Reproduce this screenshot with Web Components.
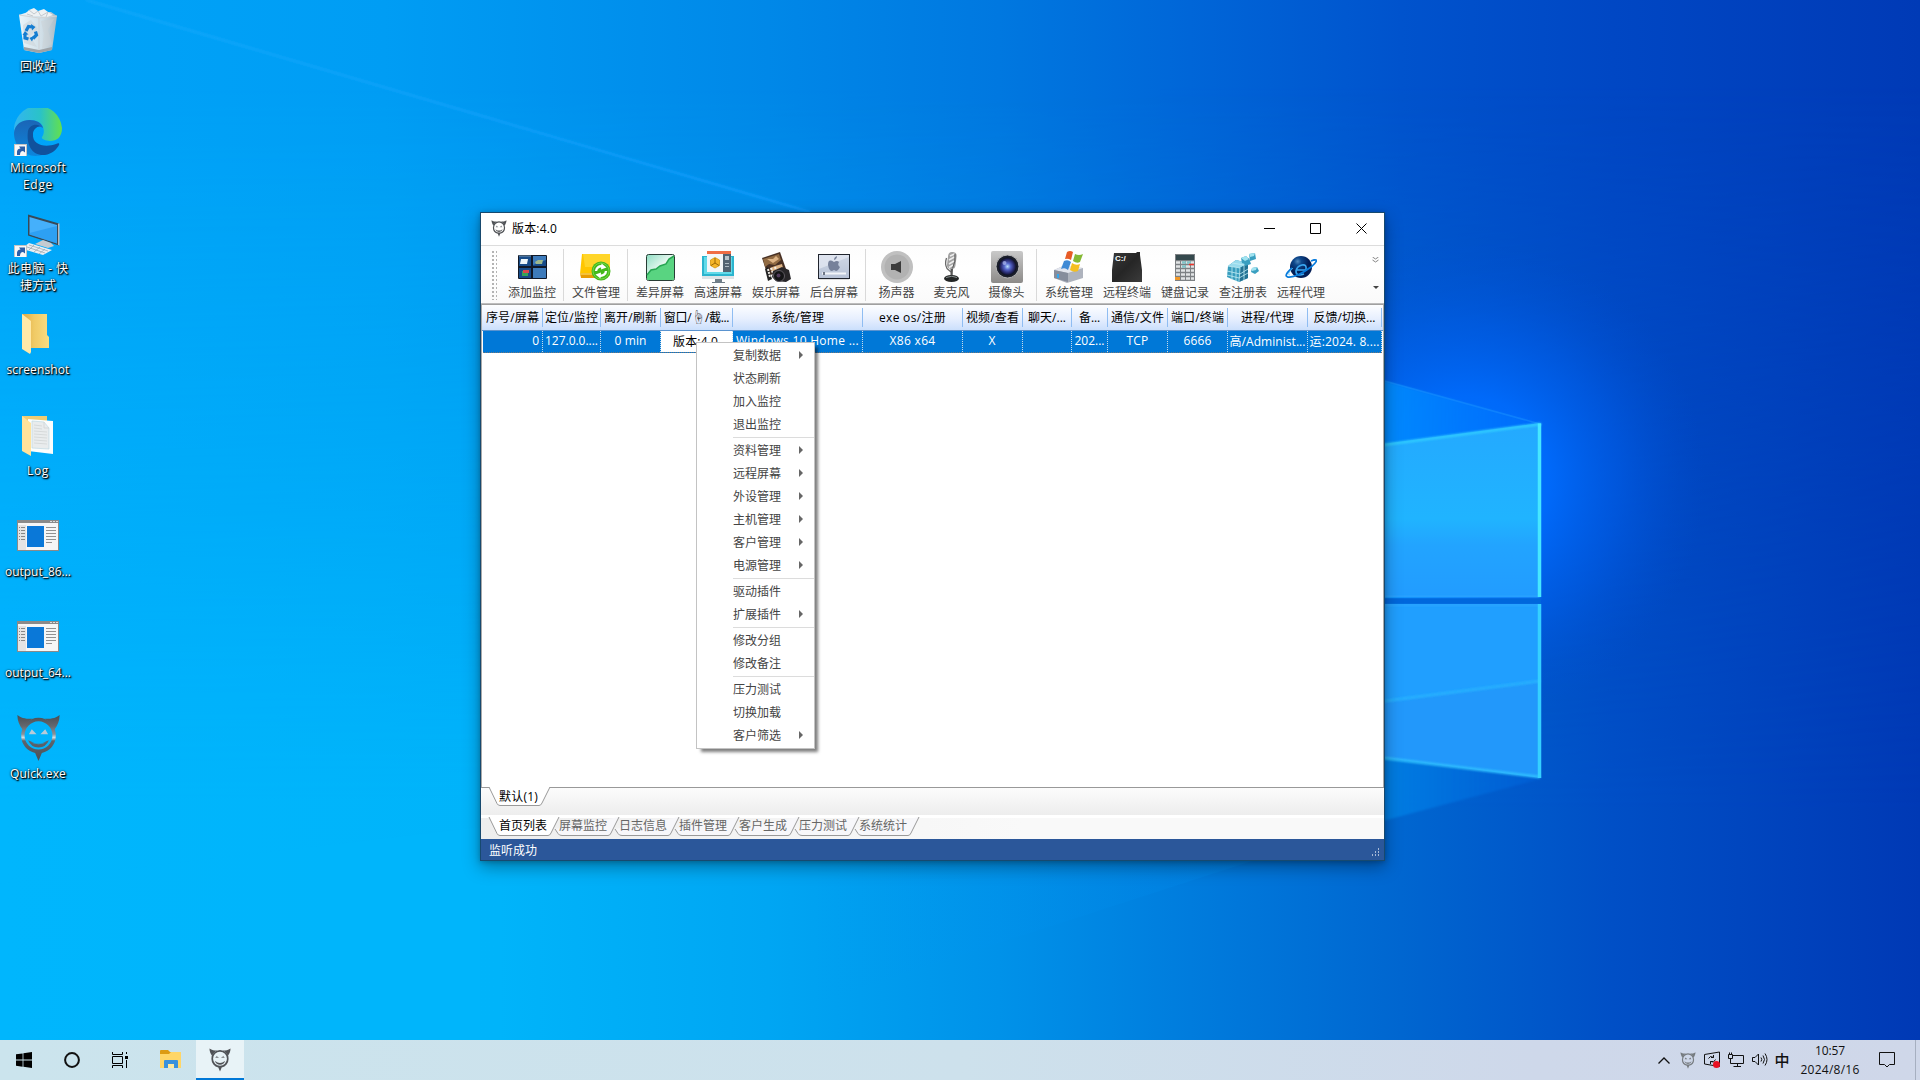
<!DOCTYPE html>
<html lang="zh-CN">
<head>
<meta charset="utf-8">
<title>Desktop</title>
<style>
html,body{margin:0;width:1920px;height:1080px;overflow:hidden;font-family:"Open Sans","Noto Sans CJK SC",sans-serif;font-size:12px;}
</style>
</head>
<body>
<desktop-screen></desktop-screen>
<script>
const DEVIL = c => `<g fill="${c}"><path d="M1 1 C6 5 11 5 17 5 C12 8 8 11 7 17 C3 12 1 7 1 1Z M45 1 C40 5 35 5 29 5 C34 8 38 11 39 17 C43 12 45 7 45 1Z"/><path fill-rule="evenodd" d="M23 4 A18 18 0 0 1 41 23 A18 18 0 0 1 26.500 40.500 L23 49 L19.500 40.500 A18 18 0 0 1 5 23 A18 18 0 0 1 23 4Z M23 7.500 A15 15 0 0 0 8.500 22.500 A14.500 14.500 0 0 0 37.500 22.500 A15 15 0 0 0 23 7.500Z"/><path d="M12 27 Q23 34 34 27 Q31 34.500 23 35 Q15 34.500 12 27Z M15 29.500 Q23 33.500 31 29.500 Q23 32 15 29.500Z"/></g>`;
const EYES = c => `<path d="M16 16 L21 21 H13Z M30 16 L25 21 H33Z" fill="${c}"/>`;
const SHORTCUT = `<rect x="0.500" y="36.500" width="12" height="12" fill="#f8f8f8" stroke="#c4c4c4"/><path d="M3 47V43.500Q3.500 40.500 6.500 40.500L5 38.500H11V44.500L9 43Q6 43 6 47Z" fill="#2d5fa8"/>`;
const APPWIN = `<rect x="3" y="8" width="42" height="31" fill="#8a8a8a"/><rect x="4" y="11" width="40" height="27" fill="#f6f6f6"/><rect x="4" y="13" width="8" height="25" fill="#e4e4e4"/><path d="M36 9.500h2m1 0h2m1 0h2" stroke="#ddd"/><rect x="13" y="14" width="17" height="21" fill="#0a78d8"/><path d="M32 15.500h10m-10 3h10m-10 3h10m-10 3h10m-10 3h10m-10 3h6" stroke="#929292"/><path d="M5 15.500h1m1 0h4m-6 3h1m1 0h4m-6 3h1m1 0h4m-6 3h1m1 0h4m-6 3h1m1 0h4" stroke="#888"/>`;
const ICONS = {
 devil:[46,50,DEVIL('url(#dv)')+EYES('#b9cbd8')+`<defs><linearGradient id="dv" gradientUnits="userSpaceOnUse" x1="0" y1="0" x2="0" y2="50"><stop stop-color="#454b52"/><stop offset=".25" stop-color="#64676d"/><stop offset=".42" stop-color="#8b9299"/><stop offset=".49" stop-color="#d0dce3"/><stop offset=".56" stop-color="#5f646b"/><stop offset="1" stop-color="#4a4e54"/></linearGradient></defs>`],
 devilS:[46,50,DEVIL('#505357')+EYES('#8f9498')],
 devilG:[46,50,DEVIL('#777c80')+EYES('#777c80')],
 bin:[48,48,`<defs><linearGradient id="b1"><stop stop-color="#fbfbfb"/><stop offset=".6" stop-color="#e0e3e6"/><stop offset="1" stop-color="#b7bdc2"/></linearGradient></defs><path d="M5 8 L14 5 37 5 43 9 38 43 25 46 10 43Z" fill="url(#b1)" opacity=".93"/><path d="M5 8 25 11 43 9" stroke="#d1d4d6" fill="none"/><path d="M10 40 25 43 38 40 38 43 25 46 10 43Z" fill="#9ea3a7"/><path d="M25 11V43" stroke="#cdd1d5"/><path d="M9 18 17 13 24 22 16 29 23 40 10 36Z M27 14 40 12 34 23 38 37 28 42 30 27Z" fill="#ccd1d5" opacity=".5"/><path d="M11 7 15 3 20 1 24 4 30 2 34 5 39 8 33 10 24 9 17 9Z" fill="#eef1f3"/><path d="M15 3 20 7 24 4 27 9 34 5 32 10M13 7 19 9" stroke="#c3c9ce" fill="none"/><g fill="none" stroke="#147dd1" stroke-width="3.200"><path d="M12 24 14.500 19.500 18 20M21.500 24.500 22.500 28 19 31.500M14.500 32 11 31 11 27"/></g><path d="M17 17 21.500 20 18 23.500Z M20.500 28.500 18 34.500 15.500 31Z M8.500 28 11 24 14.500 27.500Z" fill="#147dd1"/>`],
 edge:[48,48,`<defs><linearGradient id="e1"><stop stop-color="#32b5f1"/><stop offset=".55" stop-color="#2ac3c7"/><stop offset="1" stop-color="#64e04c"/></linearGradient><linearGradient id="e2" x2="0" y2="1"><stop stop-color="#1b65b6"/><stop offset="1" stop-color="#0c86dc"/></linearGradient></defs><path d="M0 24 A24 24 0 0 1 48 20 C48 29 43 33 36 33 C31 33 27 31 28 29 C32 23 30 12 16 12 C8 12 2 17 0 24Z" fill="url(#e1)"/><path d="M0 25 C1 8 27 9 29 20 C24 17 18 20 18 27 C18 36 24 43 31 46 C14 53 0 40 0 25Z" fill="url(#e2)"/><path d="M14 23 C12 37 18 48 31 47 C38 46 43 41 45 37 C46 35 44 35 42 36 C31 40 18 37 19 26 C19 22 22 19 26 18 C21 15 15 18 14 23Z" fill="#10529d"/>${SHORTCUT}`],
 pc:[48,48,`<path d="M14 5.500 L45 14.500 V36.500 L14 26.500Z" fill="#384957"/><path d="M15.500 8 43 16 V34.500 L15.500 25.500Z" fill="#45b0fb"/><path d="M15.500 24 43 17 V34.500 L15.500 25.500Z" fill="#168fec" opacity=".5"/><path d="M44 14.500 45.500 14.500 V36.500 L44 36Z" fill="#b5bac0"/><path d="M29 31 37 34 40 37 34 39 21 35Z" fill="#c5cbd0"/><path d="M11 37 L15 34 38 41 29 46 12 41Z" fill="#e9eef2"/><path d="M15 36 34 42M13 38 31 44M20 36 15 41M26 38 20 43M31 40 25 45" stroke="#97a2ab" stroke-width=".7"/>${SHORTCUT}`],
 folder:[48,48,`<defs><linearGradient id="f1"><stop stop-color="#dda844"/><stop offset=".45" stop-color="#f0ca65"/><stop offset="1" stop-color="#f8dc82"/></linearGradient></defs><path d="M8 4H33V25L35 27V38H8Z" fill="url(#f1)"/><path d="M8 4 17 11V42L16 44 8 39Z" fill="#ffe9a8"/>`],
 folderDoc:[48,48,`<path d="M8 5H33V40H8Z" fill="#efcc73"/><path d="M14 8 39 10 V43 L14 40Z" fill="#fbfdfd"/><path d="M18 10 30 11 35 17V38L18 37Z" fill="#e9eced" stroke="#bed8e2" stroke-width=".7"/><path d="M30 11V17H35M20 14 28 15M20 17 28 18M20 20 33 21M20 23 33 24M20 26 33 27M20 29 33 30M20 32 33 33" stroke="#d0d4d4" fill="none" stroke-width=".8"/><path d="M8 5 17 12V45L8 40Z" fill="#ffe29b"/>`],
 appwin:[48,48,APPWIN],
 monitors:[32,32,`<rect x="2" y="4" width="29" height="24" rx="1" fill="#101827"/><path d="M3 5H15V15H3ZM17 5H30V15H17ZM3 17H15V27H3ZM17 17H30V27H17Z" fill="#174b88"/><path d="M17 17H30V27H17ZM17 5H30V9L17 14Z" fill="#3d7bbb"/><path d="M5 8H12L11 13H4Z" fill="#edf6fa"/><path d="M19 11 22 9H27L26 13H20Z" fill="#9fb98d"/><path d="M6 20H12V25H6Z" fill="#36a457"/><path d="M7 19H13V22H7Z" fill="#d9484d"/><path d="M3 5H15" stroke="#7796b1"/>`],
 files:[32,32,`<path d="M2 3H30V24L26 27H2L0 23Z" fill="#ffc600"/><path d="M3 3H30V16H5Z" fill="#ffd529"/><path d="M0 22H29L27 27H1Z" fill="#e89c05"/><path d="M0 23H26" stroke="#ffe879"/><circle cx="21" cy="20" r="9.500" fill="#45b91b"/><circle cx="21" cy="20" r="8" fill="none" stroke="#71d646"/><path d="M16 20A5 5 0 0 1 22.500 15.500M26 20A5 5 0 0 1 19.500 24.500" fill="none" stroke="#fff" stroke-width="2.400"/><path d="M21.500 12.500 26.500 16.500 21 18.500Z M20.500 27.500 15.500 23.500 21 21.500Z" fill="#fff"/>`],
 chart:[32,32,`<defs><linearGradient id="c1" x2="1" y2="1"><stop stop-color="#8edec3"/><stop offset=".5" stop-color="#e9f8f1"/><stop offset="1" stop-color="#b9eacb"/></linearGradient></defs><rect x="2.500" y="3.500" width="28" height="26" rx="2" fill="url(#c1)" stroke="#283d35"/><path d="M3 24 7 19 12 18 16 15 22 13 25 8 30 5V28Q30 29 29 29H4Q3 29 3 28Z" fill="#59d481"/><path d="M3 24 7 19 12 18 16 15 22 13 25 8 30 5" fill="none" stroke="#27a552" stroke-width="1.500"/>`],
 fast:[32,32,`<rect x="0" y="5" width="32" height="23" fill="#2bb4ce"/><rect x="2" y="6" width="28" height="17" fill="#62dae9"/><rect x="5" y="1" width="24" height="20" fill="#f3f6f8"/><path d="M5 0H29V3H5Z" fill="#f06d44"/><path d="M21 3H29V21H21Z" fill="#526371"/><rect x="23" y="5" width="4" height="4" fill="#b9c3ca"/><path d="M23 12.500h4m-4 3h4" stroke="#adbac2"/><path d="M13 6.500 17.500 9V14.500L13 17 8.500 14.500V9Z" fill="#f5b62a" stroke="#d6960d" stroke-width=".8"/><path d="M13 7V12L9 14.500M13 12 17 14.500" fill="none" stroke="#9c6903"/><path d="M0 25H32V28H0Z" fill="#dde4e7"/><path d="M13 28H20V31H13ZM10 31H23V32H10Z" fill="#6f7d88"/>`],
 fun:[32,32,`<path d="M2 7 20 1 26 18 8 25Z" fill="#473024"/><path d="M3 8 19 3 21 9 15 14 9 13 5 16Z" fill="#916b43"/><path d="M7 8 13 8 16 5 19 8 13 12Z M10 17 15 15 22 13 23 17 12 21Z" fill="#ddb486"/><path d="M5 18 8 16 12 28 8 30Z" fill="#222"/><path d="M8 18 10 26M11 17 14 25M15 16 17 22" stroke="#f1eee8" stroke-width="2" stroke-dasharray="2 1"/><path d="M13 20 22 16 29 19 31 28 26 31 16 30 12 26Z" fill="#282629"/><circle cx="19" cy="25" r="5.500" fill="#141416" stroke="#5d5960"/><circle cx="18.500" cy="24.500" r="2" fill="#513b5b"/>`],
 mac:[32,32,`<defs><linearGradient id="m1" x2="0" y2="1"><stop stop-color="#cfd7e5"/><stop offset="1" stop-color="#b7c2d6"/></linearGradient></defs><rect x=".5" y="3.500" width="31" height="24" fill="url(#m1)" stroke="#20242d"/><path d="M1 4H31V6L1 18Z" fill="#e6eaf3" opacity=".7"/><path d="M16 11Q10 7 10 14Q11 20 14 20L16 19 18 20Q20 20 22 16Q19 14 21 11Q19 9 16 11ZM16 9Q16 6 19 5Q19 8 16 9Z" fill="#76819a"/><path d="M4 22.500H28" stroke="#f2f4f8" stroke-width="2"/><path d="M6 21V24" stroke="#6d7585" stroke-width="2"/><path d="M1 28.500H31" stroke="#ddd"/>`],
 speaker:[32,32,`<circle cx="16" cy="16" r="16" fill="#c0c0c0"/><circle cx="16" cy="16" r="12.500" fill="#b2b2b2"/><path d="M10 13H14L20 10V22L14 19H10Z" fill="#3b3b3b"/>`],
 mic:[32,32,`<path d="M10.500 7Q8.500 13 11 17.500L15 21" fill="none" stroke="#6a6a6a" stroke-width="1.300"/><rect x="11.500" y="1" width="8.500" height="17" rx="4" fill="#a2a2a2" transform="rotate(7 16 10)"/><path d="M14 5 18.500 3M13 9 18.500 6M13 13 18 10M13 16.500 17 14" stroke="#ededed" stroke-width="1.500"/><path d="M19 3Q20 10 16.500 17.500" fill="none" stroke="#5a5a5a"/><path d="M14.500 18H17L16.500 27H14.500Z" fill="#565656"/><ellipse cx="15.500" cy="27.500" rx="7.500" ry="3.500" fill="#242626"/><path d="M10 26.500Q16 24 21 26.500" stroke="#8b9393" fill="none"/>`],
 cam:[32,32,`<defs><linearGradient id="k1" x2="0" y2="1"><stop stop-color="#c9c9c9"/><stop offset="1" stop-color="#8c8a88"/></linearGradient><radialGradient id="k2"><stop stop-color="#b8dfff"/><stop offset=".35" stop-color="#5668cb"/><stop offset=".7" stop-color="#2c2f76"/><stop offset="1" stop-color="#0b0e1d"/></radialGradient></defs><rect width="32" height="32" rx="2" fill="url(#k1)"/><circle cx="16.500" cy="15.500" r="11.500" fill="#1a1e2a" stroke="#b9b9b9"/><circle cx="16.500" cy="15.500" r="9" fill="url(#k2)"/><circle cx="13.500" cy="12" r="2" fill="#afbdf3" opacity=".7"/>`],
 sys:[32,32,`<path d="M1 19 10 15 30 17 30 27 14 32 1 27Z" fill="#aeb3bd"/><path d="M1 19 10 15 30 17 15 22Z" fill="#e2e5ed"/><path d="M1 19 15 22 15 31 1 27Z" fill="#868d9c"/><rect x="4" y="23" width="2" height="4" fill="#32a7ef"/><path d="M14 1Q17-1 20 1L18 9Q15 7 12 8Z" fill="#e75b26"/><path d="M22 3Q26 5 30 3L27 11Q24 13 20 10Z" fill="#84b934"/><path d="M11 10Q15 8 18 11L15 19Q12 16 8 18Z" fill="#3f8ad5"/><path d="M19 12Q23 15 27 13L25 20Q21 22 17 19Z" fill="#f4bf21"/>`],
 term:[32,32,`<defs><linearGradient id="t1" x2="1" y2="1"><stop stop-color="#393939"/><stop offset=".5" stop-color="#262626"/><stop offset="1" stop-color="#3b3b3b"/></linearGradient></defs><path d="M3 2H25L26 1H29V4L31 19V31H1V19Z" fill="url(#t1)"/><text x="4" y="10" font-family="Liberation Sans" font-size="8" font-weight="bold" fill="#fff">C:/</text>`],
 calc:[32,32,`<rect x="6" y="3" width="20" height="27" fill="#7d8184"/><rect x="7" y="4" width="18" height="5" fill="#35494d"/><path d="M7 11.500h18m-18 4h18m-18 4h18m-18 4h18m-18 4h18" stroke="#e1e4e5" stroke-width="2.500" stroke-dasharray="4 1"/><path d="M13 11.500h4m1 0h4m-9 4h4" stroke="#83c4c7" stroke-width="2.500"/><path d="M20 13.500H25" stroke="#ee342b" stroke-width="1.500"/><path d="M6 27.500H11" stroke="#ef982a" stroke-width="3"/>`],
 reg:[32,32,`<path d="M1 15 9 9 21 12 21 27 12 31 0 26Z" fill="#389dbe"/><path d="M1 15 9 9 21 12 13 17Z" fill="#99dbed"/><path d="M13 17 21 12V27L12 31Z" fill="#237293"/><path d="M1 15 13 17 12 31M5 12 17 14M0 20 13 23 21 18M0 24 12 27 21 22M5 16V29M9 17V30M17 14V29" stroke="#c1edf5" fill="none" stroke-width=".8"/><path d="M14 7 19 5 22 8 21 14 15 12ZM22 3 28 2 29 8 23 10ZM25 17 30 16 32 20 28 23 24 21ZM16 9 22 7 24 13 18 15Z" fill="#3a9fc0"/><path d="M14 7 19 5 22 8 18 10ZM22 3 28 2 27 5 23 6ZM25 17 30 16 29 19 25 20Z" fill="#a0e3f0"/>`],
 proxy:[32,32,`<defs><radialGradient id="p1" cx=".35" cy=".25"><stop stop-color="#5188bb"/><stop offset=".35" stop-color="#0d478b"/><stop offset="1" stop-color="#021d55"/></radialGradient></defs><circle cx="16" cy="16" r="11" fill="url(#p1)"/><path d="M12 19H21Q22 13 17 14Q12 15 11 20Q11 26 19 23" stroke="#3ba7f0" fill="none" stroke-width="1.700"/><path d="M7 17Q-2 25 3 26Q11 27 26 16Q35 8 29 9L26 10" fill="none" stroke="#087bdc" stroke-width="1.800"/><path d="M8 17Q1 24 5 24" fill="none" stroke="#63c9f9" stroke-width=".7"/>`],
 start:[16,16,`<path d="M0 2.300 6.600 1.400V7.600H0ZM7.400 1.300 16 0V7.600H7.400ZM0 8.400H6.600V14.700L0 13.800ZM7.400 8.400H16V16L7.400 14.800Z" fill="#000"/>`],
 cortana:[16,16,`<circle cx="8" cy="8" r="6.900" fill="none" stroke="#111" stroke-width="2"/>`],
 tasks:[16,16,`<path d="M.5 0V2.500H10.500V0M.5 16V13.500H10.500V16M.5 4.500H10.500V11.500H.5ZM14.500 0V2M14.500 8V16" fill="none" stroke="#000"/><rect x="13" y="4" width="3" height="3"/>`],
 explorer:[22,20,`<path d="M0 1Q0 0 1 0H8L10 2H20Q21 2 21 3V6H0Z" fill="#dc9b13"/><path d="M0 4H9L11 2H21V18H0Z" fill="#ffd667"/><path d="M4 18V11Q4 10 5 10H17Q18 10 18 11V18H14V14H8V18Z" fill="#3a91dc"/><path d="M8 14H14V18H8Z" fill="#ffe89e"/>`],
 up:[12,7,`<path d="M.5 6.500 6 1 11.500 6.500" fill="none" stroke="#111" stroke-width="1.300"/>`],
 sync:[18,18,`<path d="M.5 3.500 15.500 1V15.500L.5 13Z" fill="none" stroke="#111"/><path d="M4.500 7.500Q6 4 9.500 6.500V4M11.500 8.500Q10 12.500 6.500 10.500V13M9.500 6.500H7M6.500 10.500H9" fill="none" stroke="#111"/><circle cx="12.500" cy="13.500" r="3.500" fill="#e81123"/>`],
 net:[17,16,`<path d="M5 3.500H15.500V11.500H2.500V6M9.500 12V14.500M5.500 14.500H13M.5 2.500H4.500V6.500H.5Z M1.500 0.500V2.500M3.500 .5V2.500" fill="none" stroke="#111"/>`],
 vol:[16,16,`<path d="M.5 5.500H3L6.500 2V13L3 9.500H.5Z M9 5.500Q10.500 7.500 9 9.500M11 3.500Q14 7.500 11 11.500M13 1.500Q17 7.500 13 13.500" fill="none" stroke="#111"/>`],
 note:[16,16,`<path d="M.5 .5H15.500V12.500H10.500L8 15 5.500 12.500H.5Z" fill="none" stroke="#111"/>`],
};
const define=(name,html,setup)=>customElements.define(name,class extends HTMLElement{
  connectedCallback(){
    if(this.shadowRoot)return;
    const t=document.createElement('template');
    t.innerHTML=typeof html==='function'?html(this):html;
    this.attachShadow({mode:'open'}).append(t.content.cloneNode(true));
    if(setup)setup(this);
  }
});

define('svg-icon',e=>{const [w,h,s]=ICONS[e.getAttribute('name')];return `<style>:host{display:block;flex:none}svg{display:block}</style><svg width="${e.getAttribute('w')||w}" height="${e.getAttribute('h')||h}" viewBox="0 0 ${w} ${h}">${s}</svg>`;});

/* One line of text whose tracking is adjusted to a given advance width. */
define('fit-text',`<style>:host{display:inline-block;white-space:pre}span{display:inline-block}</style><span><slot></slot></span>`,e=>{
  const s=e.shadowRoot.querySelector('span'),w=+e.getAttribute('w');
  if(!w)return;
  const n=[...e.textContent].length,d=(w-s.getBoundingClientRect().width)/n;
  s.style.letterSpacing=d.toFixed(3)+'px';
});

define('wall-paper',`<style>:host{display:block;position:absolute;inset:0}svg{display:block}</style>
<svg width="1920" height="1080" viewBox="0 0 1920 1080">
<defs>
<linearGradient id="top"><stop stop-color="#00a4f9"/><stop offset=".2" stop-color="#009df4"/><stop offset=".4" stop-color="#0088e8"/><stop offset=".52" stop-color="#0078e0"/><stop offset=".62" stop-color="#0066d8"/><stop offset=".73" stop-color="#0053cd"/><stop offset=".84" stop-color="#0047c4"/><stop offset="1" stop-color="#003ab6"/></linearGradient>
<linearGradient id="bot"><stop stop-color="#00b6fd"/><stop offset=".26" stop-color="#00b4fa"/><stop offset=".4" stop-color="#00a6f3"/><stop offset=".52" stop-color="#0092e9"/><stop offset=".62" stop-color="#007cdd"/><stop offset=".73" stop-color="#0066d0"/><stop offset=".84" stop-color="#004fc6"/><stop offset="1" stop-color="#0039b5"/></linearGradient>
<linearGradient id="fade" x2="0" y2="1"><stop offset=".08" stop-color="#000"/><stop offset=".75" stop-color="#fff"/></linearGradient>
<mask id="fm"><rect width="1920" height="1080" fill="url(#fade)"/></mask>
<radialGradient id="glow" gradientUnits="userSpaceOnUse" cx="0" cy="0" r="1" gradientTransform="translate(1465 480) scale(240 240)"><stop stop-color="#0074ff"/><stop offset=".35" stop-color="#006cff" stop-opacity=".9"/><stop offset=".65" stop-color="#0060f0" stop-opacity=".5"/><stop offset="1" stop-color="#0050d4" stop-opacity="0"/></radialGradient>
<linearGradient id="bu" gradientUnits="userSpaceOnUse" x1="1385" y1="0" x2="1540" y2="0"><stop stop-color="#0090ff" stop-opacity=".85"/><stop offset="1" stop-color="#0070ff" stop-opacity=".4"/></linearGradient>
<linearGradient id="bd" gradientUnits="userSpaceOnUse" x1="1385" y1="0" x2="1540" y2="0"><stop stop-color="#0082e6" stop-opacity=".85"/><stop offset="1" stop-color="#0062dc" stop-opacity=".5"/></linearGradient>
<linearGradient id="beam"><stop offset=".3" stop-color="#0094f4" stop-opacity="0"/><stop offset="1" stop-color="#0094f4" stop-opacity=".4"/></linearGradient>
<linearGradient id="pane" x2="0" y2="1"><stop stop-color="#24a9ff"/><stop offset=".55" stop-color="#20b4ff"/><stop offset=".7" stop-color="#22a4ff"/><stop offset="1" stop-color="#229cff"/></linearGradient>
<linearGradient id="ray" gradientUnits="userSpaceOnUse" x1="86" y1="0" x2="810" y2="0"><stop stop-color="#28b0ff" stop-opacity=".35"/><stop offset="1" stop-color="#109cff" stop-opacity=".8"/></linearGradient>
<filter id="soft" x="-10%" y="-10%" width="120%" height="120%"><feGaussianBlur stdDeviation="1"/></filter>
</defs>
<rect width="1920" height="1080" fill="url(#top)"/>
<rect width="1920" height="1080" fill="url(#bot)" mask="url(#fm)"/>
<rect width="1920" height="1080" fill="url(#glow)"/>
<path d="M600 700H1300V846L1255 860 700 1040H600Z" fill="url(#beam)" opacity=".5"/>
<path d="M1300 358 1540 423V601H1300Z" fill="url(#bu)" filter="url(#soft)"/>
<path d="M1300 601H1540V779L1300 843Z" fill="url(#bd)" filter="url(#soft)"/>
<path d="M86 0 810 212" stroke="url(#ray)" stroke-width="2.500" filter="url(#soft)"/>
<path d="M1370 377 1540 424" stroke="#229aff" stroke-width="1.500" opacity=".4"/>
<path d="M0 884 480 827V1040H0Z" fill="#00b8ff" opacity=".2"/>
<path d="M1300 455 1541 423V597H1300Z" fill="url(#pane)"/>
<path d="M1300 604H1541V778L1300 747Z" fill="#2298fb"/>
<path d="M1300 712 1541 680V604H1300Z" fill="#209fff"/>
<g fill="none" filter="url(#soft)"><path d="M1300 456 1541 424" stroke="#30ceff" stroke-width="2.500"/><path d="M1300 712 1540 681" stroke="#28b4ff" stroke-width="2.500"/><path d="M1300 748 1540 777" stroke="#31c3ff" stroke-width="2.500"/><path d="M1300 597H1540M1300 605H1540" stroke="#2da9ff" stroke-width="1.500"/></g>
<path d="M1539.500 423.500V597" stroke="#46e7ff" stroke-width="3.500"/><path d="M1539.500 604V778" stroke="#35d0ff" stroke-width="3.500"/>
<path d="M1300 601H1541" stroke="#0067dc" stroke-width="5.500"/>
</svg>`);

define('desk-item',e=>`<style>
:host{display:flex;flex-direction:column;align-items:center;width:76px;height:101px;box-sizing:border-box;padding-top:5px;color:#fff;line-height:17px;text-shadow:1px 1px 2px #000,0 0 2px rgba(0,0,0,.8),1px 1px 1px rgba(0,0,0,.9)}
svg-icon{margin-bottom:3px}.devil{margin:0 0 3px}</style>
<svg-icon name="${e.getAttribute('icon')}" ${e.getAttribute('icon')==='devil'?'class="devil" w="45" h="48"':'w="48" h="48"'}></svg-icon><slot></slot>`);

define('tool-button',e=>`<style>
:host{display:flex;flex-direction:column;align-items:center;width:${e.getAttribute('w')||58}px;color:#444;line-height:16px;flex:none}svg-icon{margin-bottom:2px}</style>
<svg-icon name="${e.getAttribute('icon')}"></svg-icon><slot></slot>`);
define('tool-sep',`<style>:host{display:block;flex:none;width:1px;height:52px;background:#d9d9d9;margin:-2px 3px 0 2px}</style>`);

define('tool-bar',`<style>
:host{display:flex;height:58px;box-sizing:border-box;border-bottom:1px solid #bcbcbc;background:linear-gradient(#fdfdfd,#fff 40%,#fafafa);padding:5px 0 0 9px;align-items:flex-start}
.grip{width:6px;height:50px;margin:-1px 6px 0 1px;flex:none;background:radial-gradient(circle,#999 .6px,transparent 1px) 0 0/4px 4px}
.more{margin-left:auto;width:13px;padding-right:2px;display:flex;flex-direction:column;align-items:center;gap:23px;padding-top:6px}</style>
<div class="grip"></div>
<tool-button icon="monitors">添加监控</tool-button><tool-sep></tool-sep>
<tool-button icon="files">文件管理</tool-button><tool-sep></tool-sep>
<tool-button icon="chart">差异屏幕</tool-button><tool-button icon="fast">高速屏幕</tool-button><tool-button icon="fun">娱乐屏幕</tool-button><tool-button icon="mac">后台屏幕</tool-button><tool-sep></tool-sep>
<tool-button w="55" icon="speaker">扬声器</tool-button><tool-button w="55" icon="mic">麦克风</tool-button><tool-button w="55" icon="cam">摄像头</tool-button><tool-sep></tool-sep>
<tool-button icon="sys">系统管理</tool-button><tool-button icon="term">远程终端</tool-button><tool-button icon="calc">键盘记录</tool-button><tool-button icon="reg">查注册表</tool-button><tool-button icon="proxy">远程代理</tool-button>
<div class="more"><svg width="7" height="6"><path d="M.5 0 3.500 2 6.500 0M.5 3 3.500 5 6.500 3" stroke="#888" fill="none"/></svg><svg width="6" height="4"><path d="M0 0H6L3 3Z" fill="#444"/></svg></div>`);

const COLS=[[60,'序号/屏幕',53,'0',0],[58,'定位/监控',53,'127.0.0....',53],[60,'离开/刷新',53,'0 min',32],[72,'窗口/<span class="hand">☝\uFE0E</span>/截...',65,'版本:4.0',45],[130,'系统/管理',53,'Windows 10 Home ...',123],[100,'exe os/注册',67,'X86 x64',46],[60,'视频/查看',53,'X',8],[49,'聊天/...',38,'',0],[36,'备...',21,'202...',30],[60,'通信/文件',53,'TCP',22],[60,'端口/终端',53,'6666',28],[80,'进程/代理',53,'高/Administ...',76],[74,'反馈/切换...',62,'运:2024. 8....',70]];
define('host-grid',`<style>
:host{display:flex;flex-direction:column;height:483px;background:#fff;border-left:1px solid #aaa;border-top:1px solid #a0a0a0;border-right:1px solid #aaa;box-sizing:border-box}
.row{display:flex}.cell{box-sizing:border-box;display:flex;align-items:center;justify-content:center;white-space:nowrap;flex:none}
.head{height:26px;box-sizing:border-box;padding-left:1px;background:linear-gradient(#fdfeff,#e7effe 55%,#cbdffc);border-bottom:1px solid #5a93cf;color:#000}
.head .cell{height:19px;margin-top:3px;border-right:1px solid #8fbdf2;padding-bottom:1px}
.head fit-text{line-height:17px;height:17px}.hand{font-size:14px;line-height:10px;color:#444}
.data{margin-left:1px;height:22px;width:899px;background:#0078d7;color:#fff;border-bottom:1px dotted #777;box-sizing:border-box}
.data .cell{border-right:1px dotted #c7dbe9;height:21px;padding-bottom:2px}.data .cell:first-child{justify-content:flex-end;padding-right:3px}.data .cell:nth-child(4){background:#fff;color:#000;padding-right:2px}</style>
<div class="row head">${COLS.map(c=>`<div class="cell" style="width:${c[0]}px"><fit-text w="${c[2]}">${c[1]}</fit-text></div>`).join('')}</div>
<div class="row data">${COLS.map(c=>`<div class="cell" style="width:${c[0]}px">${c[3]?`<fit-text w="${c[4]}">${c[3]}</fit-text>`:''}</div>`).join('')}</div>`);

define('sheet-tab',e=>{const w=+e.getAttribute('w'),on=e.hasAttribute('on'),first=e.hasAttribute('first');return `<style>
:host{display:grid;width:${w}px;height:19px;flex:none;margin-right:-8px;color:${on?'#000':'#666'}}svg,div{grid-area:1/1}svg{display:block;overflow:visible}div{padding-left:${first?10:8}px;line-height:var(--tab-line,17px);height:19px;white-space:nowrap}</style>
<svg width="${w}" height="19"><path d="${first?'M0 0 L8 16.500':'M4 12 L7 16.500'} Q${first?9:8} 18.500 11 18.500 H${w-11} Q${w-9} 18.500 ${w-8} 16 L${w} 0" fill="${on?'#fff':'#f7f7fa'}" stroke="#999"/></svg><div><slot></slot></div>`;});

define('menu-item',e=>`<style>:host{display:flex;align-items:center;justify-content:space-between;height:23px;box-sizing:border-box;padding:0 10px 1px 36px;color:#444}svg{display:block}</style><slot></slot>${e.hasAttribute('sub')?'<svg width="5" height="8"><path d="M0 0 4 4 0 8Z" fill="#666"/></svg>':''}`);
define('context-menu',`<style>
:host{display:block;position:absolute;left:696px;top:342px;width:119px;height:407px;box-sizing:border-box;border:1px solid #c3c3c3;padding-top:1px;background:#fff;box-shadow:4px 4px 3px -1px rgba(0,0,0,.5)}
hr{border:0;height:1px;background:#dcdcdc;margin:1px 0 1px 36px}</style>
${[['复制数据',1],['状态刷新'],['加入监控'],['退出监控'],0,['资料管理',1],['远程屏幕',1],['外设管理',1],['主机管理',1],['客户管理',1],['电源管理',1],0,['驱动插件'],['扩展插件',1],0,['修改分组'],['修改备注'],0,['压力测试'],['切换加载'],['客户筛选',1]].map(i=>i?`<menu-item ${i[1]?'sub':''}>${i[0]}</menu-item>`:'<hr>').join('')}`);

define('app-window',`<style>
:host{display:flex;flex-direction:column;position:absolute;left:480px;top:212px;width:905px;height:649px;box-sizing:border-box;border:1px solid #17496e;background:#fff;box-shadow:0 6px 16px rgba(0,0,0,.34),0 1px 5px rgba(0,0,0,.22)}
.title{height:32px;box-sizing:content-box;display:flex;align-items:center;padding:0 17px 0 10px;border-bottom:1px solid #dcdcdc;color:#000;flex:none}
.title svg-icon{margin-right:5px;margin-bottom:2px}.title fit-text{margin-bottom:2px}.ctl{margin-left:auto;display:flex;gap:35px;align-items:center;margin-bottom:1px}.ctl svg{display:block}
.groups{height:27px;border-top:1px solid #999;background:linear-gradient(#fcfcfc,#ededed);padding-left:8px;display:flex;flex:none;--tab-line:19px}
.groups sheet-tab{margin-top:-1px}
.pages{height:21px;margin-top:3px;background:#fafafa linear-gradient(90deg,#eee,#f9f9f9 60%);padding-left:8px;display:flex;flex:none;--tab-line:18px}
.pages sheet-tab{margin-top:-1px}
.status{flex:1;background:#2b579a;color:#fff;display:flex;align-items:center;justify-content:space-between;padding:0 3px 0 8px}
.status svg{align-self:flex-end;margin-bottom:3px}</style>
<div class="title"><svg-icon name="devilS" w="16" h="17"></svg-icon><fit-text w="45">版本:4.0</fit-text>
<div class="ctl"><svg width="11" height="11"><path d="M0 5.500H11" stroke="#000"/></svg><svg width="11" height="11"><path d="M.5 .5H10.500V10.500H.5Z" fill="none" stroke="#000"/></svg><svg width="11" height="11"><path d="M.5 .5 10.500 10.500M10.500 .5 .5 10.500" stroke="#000"/></svg></div></div>
<tool-bar></tool-bar><host-grid></host-grid>
<div class="groups"><sheet-tab w="61" on first><fit-text w="39">默认(1)</fit-text></sheet-tab></div>
<div class="pages"><sheet-tab w="70" on first>首页列表</sheet-tab>${['屏幕监控','日志信息','插件管理','客户生成','压力测试','系统统计'].map(t=>`<sheet-tab w="68">${t}</sheet-tab>`).join('')}</div>
<div class="status"><span>监听成功</span><svg width="9" height="9"><path d="M6.500 0V2M6.500 3V5M6.500 6V8M3.500 3V5M3.500 6V8M.5 6V8" stroke="#a7b9d5"/></svg></div>`);

define('task-bar',`<style>
:host{display:flex;position:relative;height:40px;box-sizing:border-box;background:linear-gradient(90deg,#cbe4ed,#cde1ec 50%,#ced8ea 80%,#cfd7e9);align-items:stretch;color:#111}
.b{width:48px;display:flex;align-items:center;justify-content:center;box-sizing:border-box}.wide{width:52px;padding-left:2px}.on{background:#e8f3f7;border-bottom:2px solid #0078d7;padding-top:1px}
.tray{margin-left:auto;display:flex;align-items:center}.ime{font-size:15px;font-weight:500;width:16px;text-align:center;line-height:20px}
.clock{width:80px;display:flex;flex-direction:column;align-items:center;line-height:19px;padding:0 1px 1px 0}
.show{width:4px;height:40px;border-left:1px solid #a6afc0}</style>
<div class="b" style="width:48px"><svg-icon name="start"></svg-icon></div><div class="b"><svg-icon name="cortana"></svg-icon></div><div class="b"><svg-icon name="tasks"></svg-icon></div><div class="b wide"><svg-icon name="explorer"></svg-icon></div><div class="b on"><svg-icon name="devilS" w="22" h="24"></svg-icon></div>
<div class="tray"><svg-icon name="up"></svg-icon><svg-icon name="devilG" w="16" h="17" style="margin-left:10px"></svg-icon><svg-icon name="sync" style="margin-left:8px"></svg-icon><svg-icon name="net" style="margin-left:6px"></svg-icon><svg-icon name="vol" style="margin-left:7px"></svg-icon><span class="ime" style="margin-left:6px">中</span><div class="clock"><fit-text w="30">10:57</fit-text><fit-text w="59">2024/8/16</fit-text></div><svg-icon name="note" style="margin:0 20px 0 8px"></svg-icon><div class="show"></div></div>`);

define('desktop-screen',`<style>
:host{display:flex;flex-direction:column;position:relative;width:1920px;height:1080px;overflow:hidden}
.icons{position:relative;flex:1;display:flex;flex-direction:column;padding-top:2px;box-sizing:border-box}</style>
<wall-paper></wall-paper>
<div class="icons">
<desk-item icon="bin">回收站</desk-item>
<desk-item icon="edge"><fit-text w="56">Microsoft</fit-text><fit-text w="30">Edge</fit-text></desk-item>
<desk-item icon="pc"><fit-text w="61">此电脑 - 快</fit-text><span>捷方式</span></desk-item>
<desk-item icon="folder"><fit-text w="63">screenshot</fit-text></desk-item>
<desk-item icon="folderDoc"><fit-text w="22">Log</fit-text></desk-item>
<desk-item icon="appwin"><fit-text w="66">output_86...</fit-text></desk-item>
<desk-item icon="appwin"><fit-text w="66">output_64...</fit-text></desk-item>
<desk-item icon="devil"><fit-text w="56">Quick.exe</fit-text></desk-item>
</div>
<app-window></app-window><context-menu></context-menu>
<task-bar></task-bar>`);
</script>
</body>
</html>
